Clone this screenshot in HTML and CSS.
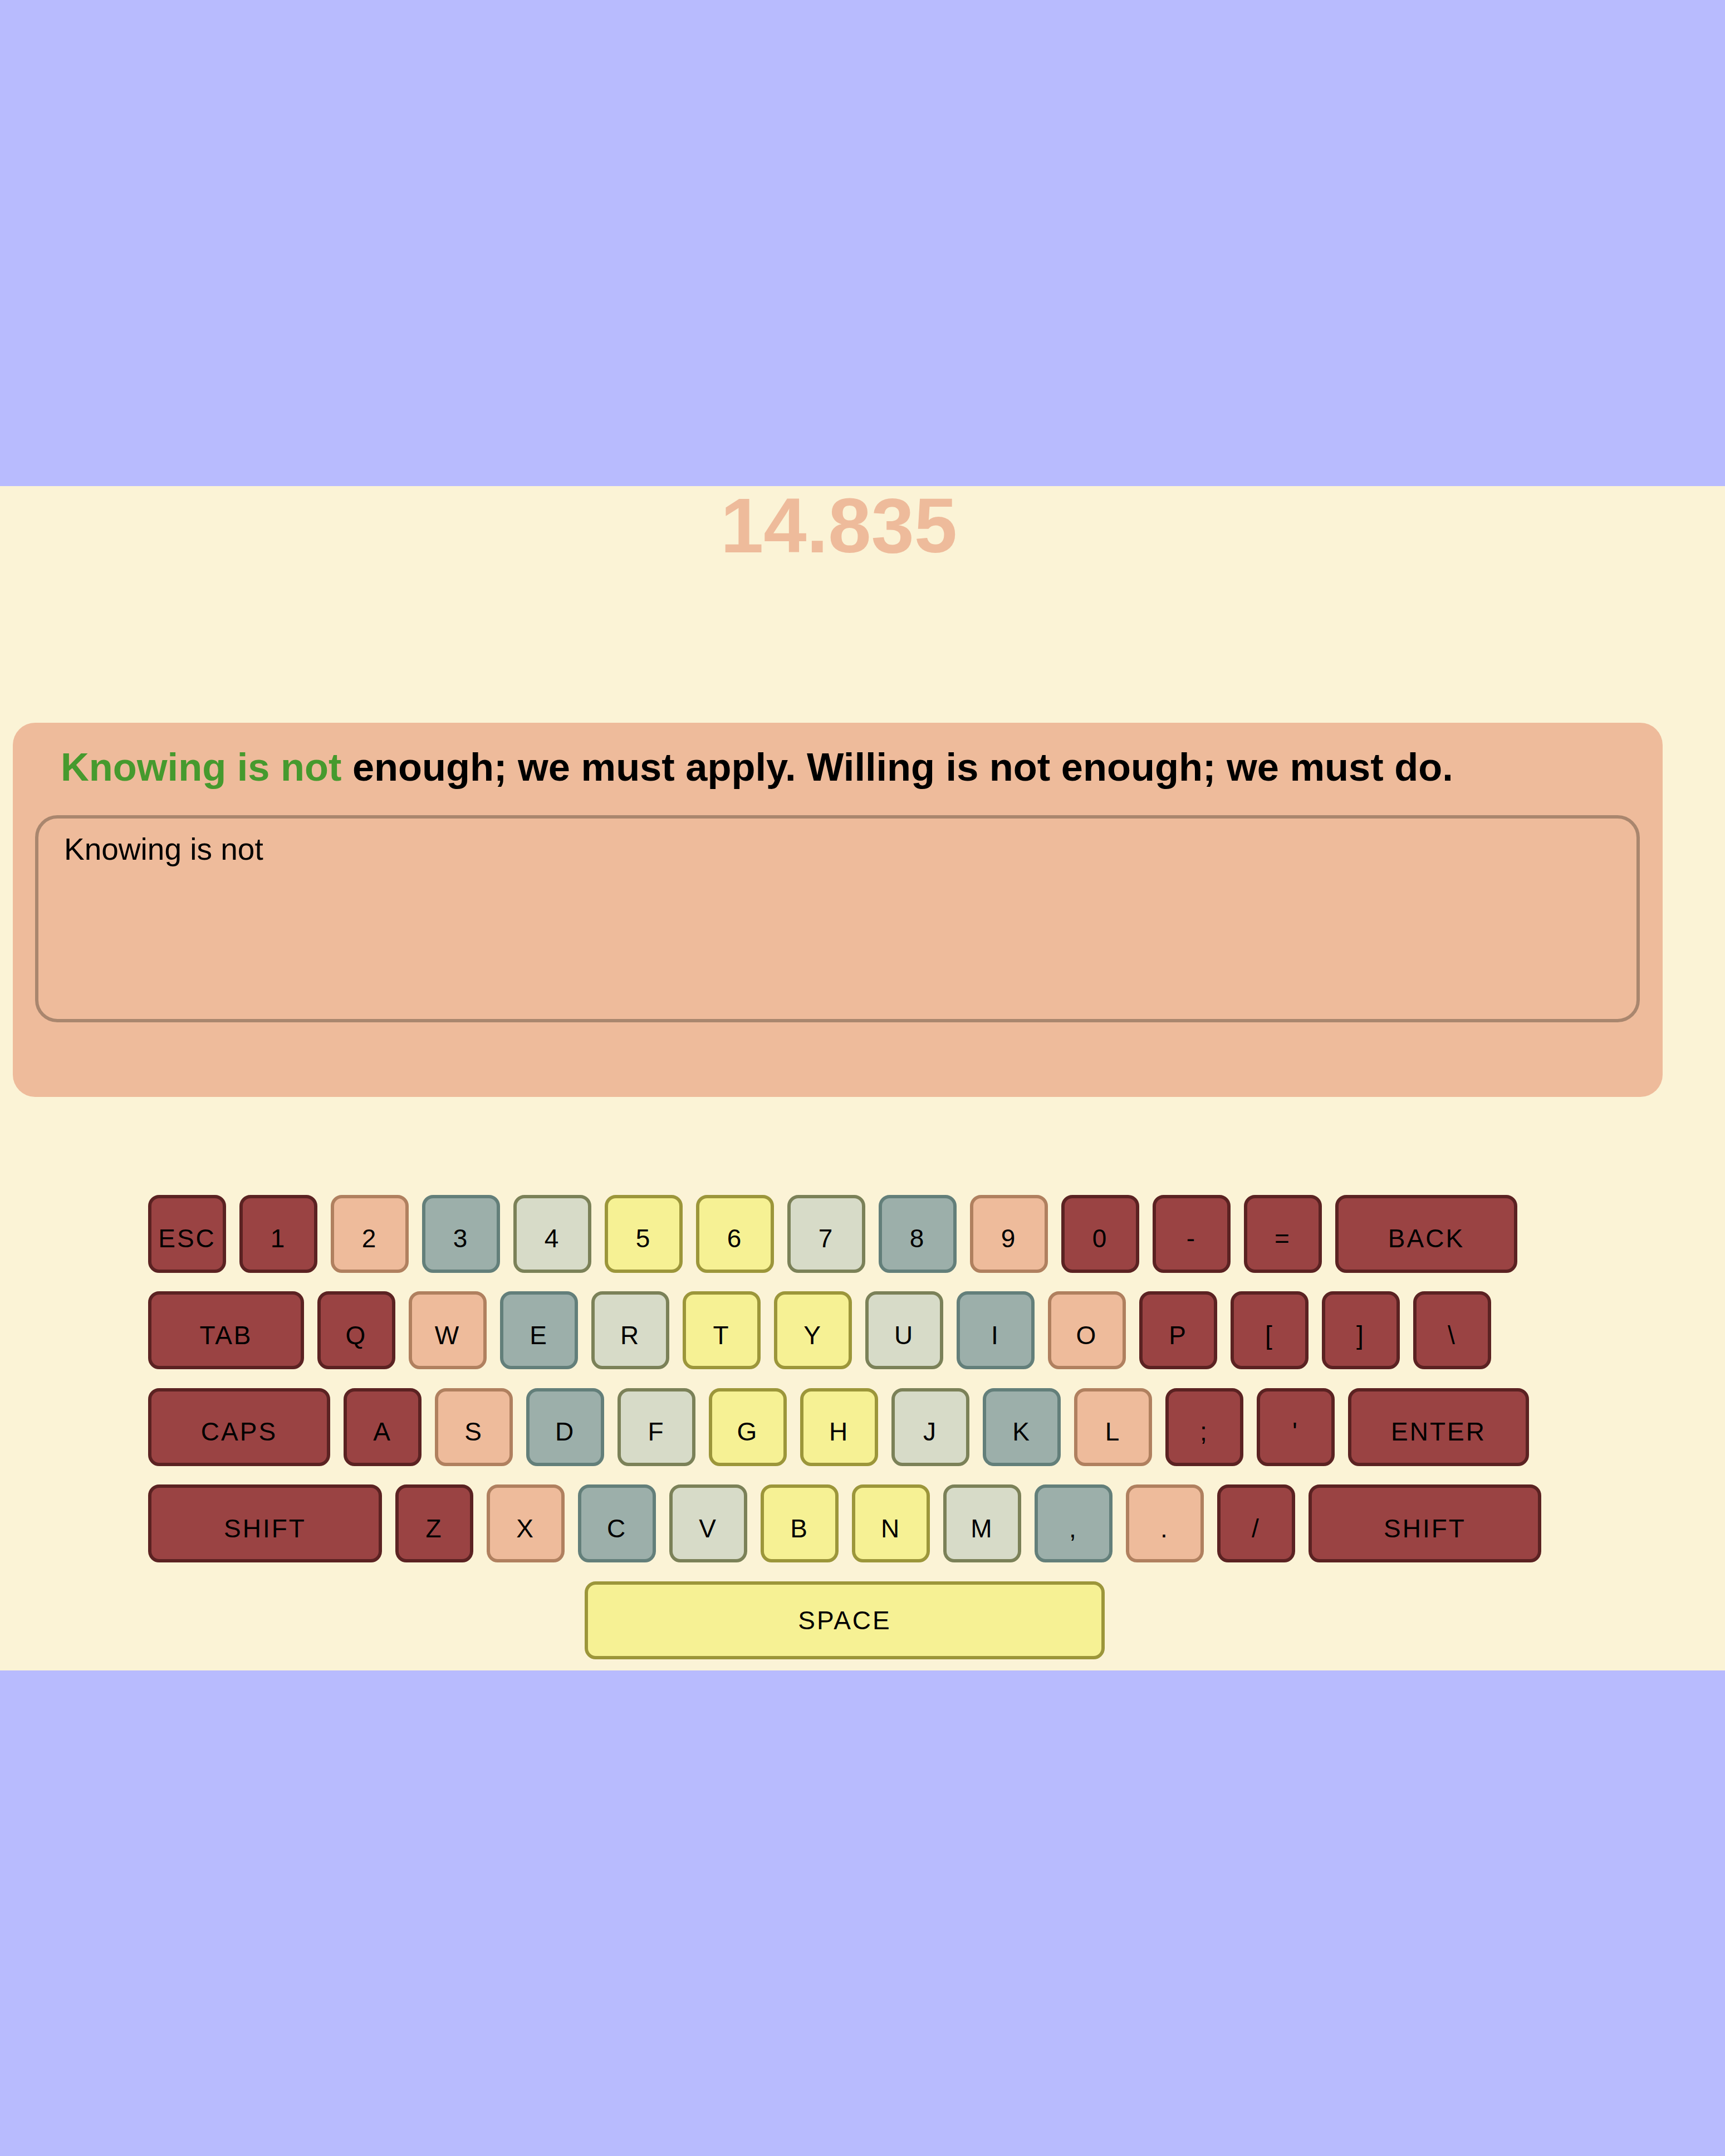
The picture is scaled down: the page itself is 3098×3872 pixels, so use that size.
FILE: index.html
```html
<!DOCTYPE html>
<html lang="en">
<head>
<meta charset="utf-8">
<title>Typing Test</title>
<link rel="stylesheet" href="styles.css">
</head>
<body>
<main class="panel">
  <div class="timer">14.835</div>
  <section class="card">
    <p class="quote"><span class="typed">Knowing is not</span> enough; we must apply. Willing is not enough; we must do.</p>
    <textarea class="entry" spellcheck="false">Knowing is not</textarea>
  </section>
  <div class="keyboard">
    <div class="row">
      <div class="key red">ESC</div>
      <div class="key red">1</div>
      <div class="key peach">2</div>
      <div class="key teal">3</div>
      <div class="key light">4</div>
      <div class="key yellow">5</div>
      <div class="key yellow">6</div>
      <div class="key light">7</div>
      <div class="key teal">8</div>
      <div class="key peach">9</div>
      <div class="key red">0</div>
      <div class="key red">-</div>
      <div class="key red">=</div>
      <div class="key red back">BACK</div>
    </div>
    <div class="row">
      <div class="key red tab">TAB</div>
      <div class="key red">Q</div>
      <div class="key peach">W</div>
      <div class="key teal">E</div>
      <div class="key light">R</div>
      <div class="key yellow">T</div>
      <div class="key yellow">Y</div>
      <div class="key light">U</div>
      <div class="key teal">I</div>
      <div class="key peach">O</div>
      <div class="key red">P</div>
      <div class="key red">[</div>
      <div class="key red">]</div>
      <div class="key red">\</div>
    </div>
    <div class="row">
      <div class="key red caps">CAPS</div>
      <div class="key red">A</div>
      <div class="key peach">S</div>
      <div class="key teal">D</div>
      <div class="key light">F</div>
      <div class="key yellow">G</div>
      <div class="key yellow">H</div>
      <div class="key light">J</div>
      <div class="key teal">K</div>
      <div class="key peach">L</div>
      <div class="key red">;</div>
      <div class="key red">'</div>
      <div class="key red enter">ENTER</div>
    </div>
    <div class="row">
      <div class="key red lshift">SHIFT</div>
      <div class="key red">Z</div>
      <div class="key peach">X</div>
      <div class="key teal">C</div>
      <div class="key light">V</div>
      <div class="key yellow">B</div>
      <div class="key yellow">N</div>
      <div class="key light">M</div>
      <div class="key teal">,</div>
      <div class="key peach">.</div>
      <div class="key red">/</div>
      <div class="key red rshift">SHIFT</div>
    </div>
    <div class="row row-space">
      <div class="key yellow space">SPACE</div>
    </div>
  </div>
</main>
</body>
</html>
```

FILE: styles.css
```css
html, body {
  margin: 0;
  padding: 0;
}

body {
  background: #b8bbfe;
  min-height: 100vh;
  display: flex;
  align-items: center;
  font-family: "Liberation Sans", Arial, sans-serif;
  color: #000;
}

.panel {
  width: 100%;
  box-sizing: border-box;
  background: #fbf3d6;
  padding: 1px 112px 20px 23px;
}

.timer {
  font-size: 139px;
  font-weight: 700;
  line-height: 140px;
  text-align: center;
  color: #eebb9b;
  padding-left: 4px;
}

.card {
  margin-top: 284px;
  background: #eebb9b;
  border-radius: 40px;
  padding: 40px 41px 40px 40px;
}

.quote {
  margin: 0 0 46px 0;
  padding-left: 46px;
  font-size: 70.4px;
  font-weight: 700;
  line-height: 80px;
  white-space: nowrap;
}

.typed {
  color: #469a2e;
}

.entry {
  display: block;
  width: 100%;
  height: 372px;
  box-sizing: border-box;
  margin: 0 0 94px 0;
  padding: 24px 46px;
  border: 6px solid #a9866e;
  border-radius: 40px;
  background: transparent;
  font-family: "Liberation Sans", Arial, sans-serif;
  font-size: 55px;
  line-height: 63px;
  color: #000;
  resize: none;
  outline: none;
  overflow: hidden;
}

.keyboard {
  margin-top: 176px;
  margin-left: 243px;
  width: max-content;
  display: flex;
  flex-direction: column;
  gap: 33.5px;
}

.row {
  display: flex;
  gap: 24px;
}

.row-space {
  justify-content: center;
}

.key {
  width: 140px;
  height: 140px;
  box-sizing: border-box;
  border: 6px solid;
  border-radius: 20px;
  display: flex;
  align-items: center;
  justify-content: center;
  padding-top: 17px;
  font-size: 46px;
  letter-spacing: 3px;
  color: #000;
}

.back { width: 327px; }
.tab { width: 280px; }
.caps { width: 327px; }
.enter { width: 325px; }
.lshift { width: 420px; }
.rshift { width: 418px; }
.space {
  width: 934px;
  padding-top: 1px;
}

.red { background: #9a4343; border-color: #5b2222; }
.peach { background: #eebb9b; border-color: #b0805f; }
.teal { background: #9cafaa; border-color: #637f7a; }
.light { background: #d7dbc8; border-color: #7b8158; }
.yellow { background: #f6f194; border-color: #9c963a; }
```
